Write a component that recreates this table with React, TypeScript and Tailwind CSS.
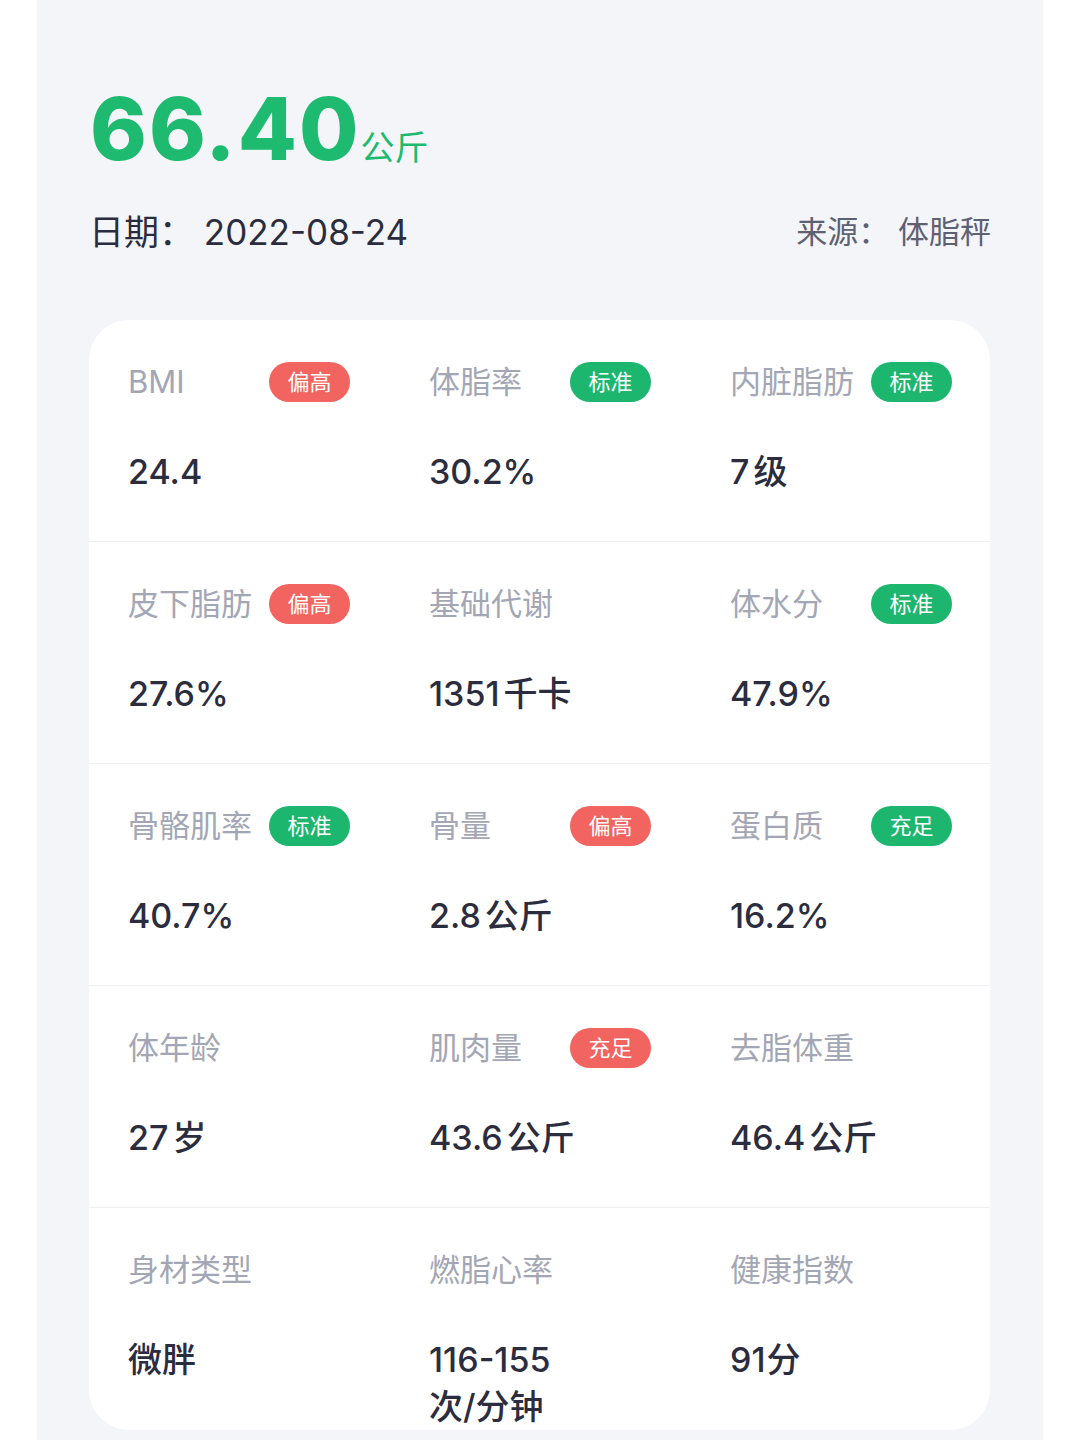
import React from "react";

type Item = { label: string; badge?: "偏高" | "标准" | "充足"; tone?: "red" | "green"; value: React.ReactNode };

const cjk = "font-['Inter','Noto_Sans_CJK_SC',sans-serif]";

const rows: Item[][] = [
  [
    { label: "BMI", badge: "偏高", tone: "red", value: "24.4" },
    { label: "体脂率", badge: "标准", tone: "green", value: "30.2%" },
    { label: "内脏脂肪", badge: "标准", tone: "green", value: <>7<span className="ml-[4px]">级</span></> },
  ],
  [
    { label: "皮下脂肪", badge: "偏高", tone: "red", value: "27.6%" },
    { label: "基础代谢", value: <>1351<span className="ml-[4px]">千卡</span></> },
    { label: "体水分", badge: "标准", tone: "green", value: "47.9%" },
  ],
  [
    { label: "骨骼肌率", badge: "标准", tone: "green", value: "40.7%" },
    { label: "骨量", badge: "偏高", tone: "red", value: <>2.8<span className="ml-[4px]">公斤</span></> },
    { label: "蛋白质", badge: "充足", tone: "green", value: "16.2%" },
  ],
  [
    { label: "体年龄", value: <>27<span className="ml-[4px]">岁</span></> },
    { label: "肌肉量", badge: "充足", tone: "red", value: <>43.6<span className="ml-[4px]">公斤</span></> },
    { label: "去脂体重", value: <>46.4<span className="ml-[4px]">公斤</span></> },
  ],
  [
    { label: "身材类型", value: "微胖" },
    {
      label: "燃脂心率",
      value: (
        <>
          116-155
          <br />
          次/分钟
        </>
      ),
    },
    { label: "健康指数", value: <>91<span className="ml-[1px]">分</span></> },
  ],
];

function Cell({ item }: { item: Item }) {
  return (
    <div className="flex flex-col">
      <div className="flex h-[40px] w-[222px] items-center justify-between">
        <span className="text-[31px] leading-[40px] text-[#a3a6b4]">{item.label}</span>
        {item.badge && (
          <span
            className={
              "flex h-[40px] w-[81px] items-center justify-center rounded-full text-[22px] text-white " +
              (item.tone === "red" ? "bg-[#f2645f]" : "bg-[#1db66f]")
            }
          >
            {item.badge}
          </span>
        )}
      </div>
      <div className="mt-[46px] text-[34px] font-medium leading-[47px] text-[#2b2d3e]">{item.value}</div>
    </div>
  );
}

export default function App() {
  return (
    <div className={"flex min-h-[1440px] w-full justify-center bg-white " + cjk}>
      <div className="flex min-h-[1440px] w-[1006px] flex-col bg-[#f4f5f9] px-[52px]">
        <div className="mt-[86px] flex h-[80px] items-baseline pl-[1px]">
          <span className="font-['Inter'] text-[86px] font-extrabold leading-none tracking-[2px] text-[#1dba6f]">
            66.40
          </span>
          <span className="text-[34px] leading-none text-[#1dba6f]">公斤</span>
        </div>
        <div className="mt-[44px] flex h-[44px] items-center justify-between">
          <span className="text-[35px] text-[#2b2d3e]">日期：&nbsp;2022-08-24</span>
          <span className="text-[31px] text-[#5e6172]">来源：&nbsp;体脂秤</span>
        </div>
        <div className="mt-[66px] mb-[12px] w-[901px] overflow-hidden rounded-[40px] bg-white">
          {rows.map((row, i) => (
            <div
              key={i}
              className={
                "grid h-[222px] grid-cols-[301px_301px_1fr] px-[39px] pt-[42px] " +
                (i < rows.length - 1 ? "border-b border-[#eef0f3]" : "h-[220px]")
              }
            >
              {row.map((item, j) => (
                <Cell key={j} item={item} />
              ))}
            </div>
          ))}
        </div>
      </div>
    </div>
  );
}
